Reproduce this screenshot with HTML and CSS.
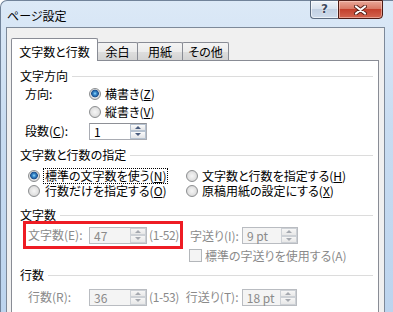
FILE: index.html
```html
<!DOCTYPE html>
<html lang="ja">
<head>
    <meta charset="UTF-8">
    <title>ページ設定</title>
    <link rel="stylesheet" href="styles.css">
</head>
<body>
    <div class="window">
        <div class="titlebar">
            <span class="title">ページ設定</span>
            <div class="caption">
                <span class="btn-help">?</span>
                <span class="btn-close">
                    <svg width="13" height="10" viewBox="0 0 13 10">
                        <path d="M2 1.5 L11 8.5 M11 1.5 L2 8.5" stroke="#5a2219" stroke-width="4" stroke-linecap="round"/>
                        <path d="M2 1.5 L11 8.5 M11 1.5 L2 8.5" stroke="#ffffff" stroke-width="2.2" stroke-linecap="round"/>
                    </svg>
                </span>
            </div>
        </div>

        <div class="client">
            <div class="tabs">
                <div class="tab active">文字数と行数</div>
                <div class="tab tab-margin">余白</div>
                <div class="tab tab-paper">用紙</div>
                <div class="tab tab-other">その他</div>
            </div>

            <div class="panel">
                <div class="group-title"><span>文字方向</span></div>
                <div class="direction-grid">
                    <span class="label">方向:</span>
                    <span class="option"><span class="radio checked"></span><span>横書き(<u>Z</u>)</span></span>
                    <span></span>
                    <span class="option"><span class="radio"></span><span>縦書き(<u>V</u>)</span></span>
                    <span class="label">段数(<u>C</u>):</span>
                    <span class="spin">
                        <span class="spin-value">1</span>
                        <span class="spin-btns"><span class="spin-up"></span><span class="spin-down"></span></span>
                    </span>
                </div>

                <div class="group-title title-grid"><span>文字数と行数の指定</span></div>
                <div class="grid-options">
                    <span class="option"><span class="radio checked"></span><span class="focus">標準の文字数を使う(<u>N</u>)</span></span>
                    <span class="option"><span class="radio"></span><span>文字数と行数を指定する(<u>H</u>)</span></span>
                    <span class="option"><span class="radio"></span><span class="nofocus">行数だけを指定する(<u>O</u>)</span></span>
                    <span class="option"><span class="radio"></span><span>原稿用紙の設定にする(<u>X</u>)</span></span>
                </div>

                <div class="group-title title-chars"><span>文字数</span></div>
                <div class="field-row">
                    <div class="highlight">
                        <span class="field-label disabled">文字数(E):</span>
                        <span class="spin disabled">
                            <span class="spin-value">47</span>
                            <span class="spin-btns"><span class="spin-up"></span><span class="spin-down"></span></span>
                        </span>
                        <span class="range">(1-52)</span>
                    </div>
                    <span class="pitch-label disabled">字送り(I):</span>
                    <span class="spin spin-pt disabled">
                        <span class="spin-value">9 pt</span>
                        <span class="spin-btns"><span class="spin-up"></span><span class="spin-down"></span></span>
                    </span>
                </div>
                <div class="check-row">
                    <span class="checkbox"></span>
                    <span class="disabled">標準の字送りを使用する(A)</span>
                </div>

                <div class="group-title title-lines"><span>行数</span></div>
                <div class="field-row lines-row">
                    <span class="field-label disabled">行数(R):</span>
                    <span class="spin disabled">
                        <span class="spin-value">36</span>
                        <span class="spin-btns"><span class="spin-up"></span><span class="spin-down"></span></span>
                    </span>
                    <span class="range">(1-53)</span>
                    <span class="pitch-label line-pitch disabled">行送り(T):</span>
                    <span class="spin spin-pt2 disabled">
                        <span class="spin-value">18 pt</span>
                        <span class="spin-btns"><span class="spin-up"></span><span class="spin-down"></span></span>
                    </span>
                </div>
            </div>
        </div>
    </div>
</body>
</html>
```

FILE: styles.css
```css
* {
    margin: 0;
    padding: 0;
    box-sizing: border-box;
}

:root {
    --text: #000000;
    --text-disabled: #8a8a8a;
    --tab-border: #898c95;
    --separator: #dcdcdc;
    --face: #f0f0f0;
}

body {
    width: 393px;
    height: 312px;
    overflow: hidden;
    font-family: "Noto Sans CJK JP", "Noto Sans", sans-serif;
    font-size: 12px;
    line-height: 14px;
    color: var(--text);
    font-feature-settings: "palt";
    white-space: nowrap;
}

u {
    display: inline-block;
    line-height: 14px;
    text-decoration: underline;
    text-underline-offset: 1px;
}

/* window frame */
.window {
    width: 393px;
    height: 312px;
    display: flex;
    flex-direction: column;
    background: linear-gradient(180deg, #dce9f7 0%, #c8dcf1 40%, #bcd4ee 100%);
    border-top: 1px solid #71839a;
    border-left: 1px solid #71839a;
    border-radius: 7px 0 0 0;
}

.titlebar {
    height: 26px;
    display: flex;
    justify-content: space-between;
    align-items: flex-start;
    padding: 0 10px 0 6px;
}

.title {
    margin-top: 7px;
    line-height: 16px;
}

.caption {
    display: flex;
    margin-top: -1px;
}

.btn-help {
    width: 28px;
    height: 19px;
    border: 1px solid #5d6c80;
    border-right: none;
    border-radius: 0 0 0 4px;
    background: linear-gradient(180deg, #eef3f9 0%, #d9e3ef 45%, #c2d0e2 50%, #cfdcec 100%);
    box-shadow: inset 0 0 0 1px rgba(255, 255, 255, 0.6);
    text-align: center;
    font-family: "DejaVu Sans", sans-serif;
    font-weight: bold;
    font-size: 12px;
    line-height: 17px;
    color: #3f4c5e;
    text-shadow: 0 0 2px #ffffff, 0 0 1px #ffffff;
}

.btn-close {
    width: 45px;
    height: 19px;
    border: 1px solid #4d1b14;
    border-radius: 0 0 4px 0;
    background: linear-gradient(180deg, #e9a898 0%, #d97a66 45%, #c4412d 50%, #d2654f 100%);
    box-shadow: inset 0 0 0 1px rgba(255, 220, 210, 0.5);
    display: flex;
    align-items: center;
    justify-content: center;
}

/* client area */
.client {
    flex: 1;
    width: 379px;
    margin-left: 5px;
    border: 1px solid #7d8999;
    border-bottom: none;
    background: var(--face);
    padding: 5px 5px 0 4px;
    display: flex;
    flex-direction: column;
}

.tabs {
    height: 27px;
    display: flex;
    align-items: flex-end;
}

.tab {
    height: 18px;
    border: 1px solid var(--tab-border);
    border-bottom: none;
    border-radius: 2px 2px 0 0;
    background: linear-gradient(180deg, #f4f4f4 0%, #ececec 50%, #dedede 51%, #d3d3d3 100%);
    text-align: center;
    padding-top: 2px;
    margin-left: -1px;
}

.tab.active {
    position: relative;
    z-index: 1;
    width: 87px;
    height: 23px;
    margin-left: 0;
    margin-bottom: -1px;
    background: #ffffff;
    padding-top: 6px;
}

.tab-margin {
    width: 41px;
}

.tab-paper {
    width: 46px;
}

.tab-other {
    width: 47px;
}

.panel {
    flex: 1;
    width: 368px;
    background: #ffffff;
    border: 1px solid var(--tab-border);
    border-bottom: none;
    padding: 8px 5px 0 8px;
}

/* group headers with rule */
.group-title {
    height: 14px;
    display: flex;
    align-items: center;
    gap: 4px;
}

.group-title::after {
    content: "";
    flex: 1;
    height: 1px;
    background: var(--separator);
}

.title-grid {
    margin-top: 7px;
}

.title-chars {
    margin-top: 10px;
}

.title-lines {
    margin-top: 6px;
}

/* direction */
.direction-grid {
    margin-top: 2px;
    padding-left: 5px;
    display: grid;
    grid-template-columns: 64px auto;
    grid-template-rows: 18px 18px 20px;
    align-items: center;
}

.option {
    display: flex;
    align-items: center;
    gap: 4px;
}

.radio {
    width: 12px;
    height: 12px;
    border-radius: 50%;
    border: 1px solid #8c8e90;
    background: radial-gradient(circle, #f6f6f6 0, #e2e2e2 4px, #cfcfcf 6px);
    flex: none;
}

.radio.checked {
    background: radial-gradient(circle at 50% 45%, #9fe0fb 0, #3b8fd2 1.5px, #1c4f8c 3.5px, #e6e6e6 4.2px, #d0d0d0 6px);
}

.grid-options {
    margin-top: 6px;
    padding-left: 8px;
    display: grid;
    grid-template-columns: 158px auto;
    grid-template-rows: 15px 15px;
    align-items: center;
}

.focus {
    outline: 1px dotted #000000;
    padding: 0 1px;
    line-height: 13px;
}

.nofocus {
    padding: 0 1px;
}

/* spin boxes */
.spin {
    width: 58px;
    height: 17px;
    display: flex;
    border: 1px solid #a9acb3;
    border-top-color: #8e9096;
    background: #ffffff;
    flex: none;
}

.spin-value {
    flex: 1;
    padding-left: 4px;
    line-height: 15px;
}

.spin-btns {
    width: 16px;
    display: flex;
    flex-direction: column;
}

.spin-up,
.spin-down {
    flex: 1;
    border: 1px solid #b6c2d0;
    background: linear-gradient(180deg, #fbfbfb, #e3e5e8);
    display: flex;
    align-items: center;
    justify-content: center;
}

.spin-up::after {
    content: "";
    border-left: 3px solid transparent;
    border-right: 3px solid transparent;
    border-bottom: 3px solid #4a5d7e;
}

.spin-down::after {
    content: "";
    border-left: 3px solid transparent;
    border-right: 3px solid transparent;
    border-top: 3px solid #4a5d7e;
}

.spin.disabled {
    border-color: #b9bcc1;
    background: #f4f4f4;
    color: var(--text-disabled);
}

.spin.disabled .spin-up,
.spin.disabled .spin-down {
    border-color: #cdd1d6;
    background: linear-gradient(180deg, #f6f6f6, #e8e8e8);
}

.spin.disabled .spin-up::after {
    border-bottom-color: #a5a9b0;
}

.spin.disabled .spin-down::after {
    border-top-color: #a5a9b0;
}

.disabled {
    color: var(--text-disabled);
}

/* character / line fields */
.field-row {
    display: flex;
    align-items: center;
}

.highlight {
    height: 28px;
    width: 160px;
    margin-top: -1px;
    margin-left: 3px;
    border: 3px solid #ee1c24;
    padding-left: 2px;
    display: flex;
    align-items: center;
    flex: none;
}

.field-label {
    width: 61px;
    flex: none;
}

.range {
    margin-left: 2px;
    color: var(--text-disabled);
    letter-spacing: -0.4px;
}

.pitch-label {
    width: 52px;
    margin-left: 7px;
    flex: none;
}

.spin-pt {
    width: 56px;
}

.check-row {
    height: 13px;
    display: flex;
    align-items: center;
    gap: 3px;
    padding-left: 169px;
}

.checkbox {
    width: 13px;
    height: 13px;
    border: 1px solid #b3b6ba;
    background: #f4f4f4;
    flex: none;
}

.lines-row {
    height: 18px;
    margin-top: 6px;
    padding-left: 8px;
}

.line-pitch {
    width: 56px;
}

.spin-pt2 {
    width: 55px;
}
```
